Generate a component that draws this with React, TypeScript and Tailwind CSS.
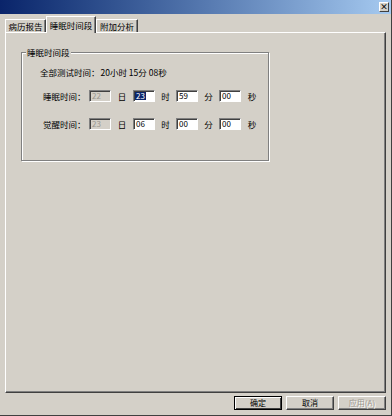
const FONT = {
  fontFamily: '"Noto Sans CJK SC", "Liberation Sans", sans-serif',
};

function TimeBox({
  value,
  disabled,
  selected,
}: {
  value: string;
  disabled?: boolean;
  selected?: boolean;
}) {
  return (
    <div
      className={
        "flex h-[12px] w-[22px] items-center border-t border-l border-b border-r border-t-[#808080] border-l-[#808080] border-b-white border-r-white pl-[1px] text-[8px] leading-none shadow-[inset_1px_1px_0_#404040] " +
        (disabled ? "bg-[#d4d0c8] text-[#9a978f]" : "bg-white text-black")
      }
    >
      {selected ? (
        <span className="bg-[#0a246a] px-px text-white">{value}</span>
      ) : (
        <span className="px-px">{value}</span>
      )}
    </div>
  );
}

function TimeRow({
  label,
  day,
  hour,
  min,
  sec,
  selectedHour,
}: {
  label: string;
  day: string;
  hour: string;
  min: string;
  sec: string;
  selectedHour?: boolean;
}) {
  return (
    <div className="flex h-[12px] items-center whitespace-nowrap text-[8.5px] leading-none">
      <span className="w-[46px]">{label}</span>
      <TimeBox value={day} disabled />
      <span className="w-[22px] text-center">日</span>
      <TimeBox value={hour} selected={selectedHour} />
      <span className="w-[21px] text-center">时</span>
      <TimeBox value={min} />
      <span className="w-[21px] text-center">分</span>
      <TimeBox value={sec} />
      <span className="w-[22px] text-center">秒</span>
    </div>
  );
}

function Tab({
  label,
  width,
  active,
}: {
  label: string;
  width: string;
  active?: boolean;
}) {
  if (active) {
    return (
      <div
        className={
          "relative z-10 -mb-px flex h-[17px] shrink-0 items-center justify-center whitespace-nowrap border-l border-t border-r border-l-white border-t-white border-r-[#404040] bg-[#d4d0c8] pt-[1px] shadow-[inset_-1px_0_0_#808080] " +
          width
        }
      >
        {label}
      </div>
    );
  }
  return (
    <div
      className={
        "flex h-[13px] shrink-0 items-center justify-center whitespace-nowrap border-l border-t border-r border-l-white border-t-white border-r-[#404040] shadow-[inset_-1px_0_0_#808080] " +
        width
      }
    >
      {label}
    </div>
  );
}

function Button({
  label,
  primary,
  disabled,
}: {
  label: string;
  primary?: boolean;
  disabled?: boolean;
}) {
  return (
    <div
      className={
        "flex h-[14px] w-[48px] items-center justify-center whitespace-nowrap text-[8px] leading-none " +
        (primary
          ? "border border-black shadow-[inset_1px_1px_0_#fff,inset_-1px_-1px_0_#404040]"
          : "border border-t-white border-l-white border-b-[#404040] border-r-[#404040] shadow-[inset_-1px_-1px_0_#808080]") +
        (disabled ? " text-[#9a978f] [text-shadow:1px_1px_0_#fff]" : " text-black")
      }
    >
      {label}
    </div>
  );
}

export default function App() {
  return (
    <div
      className="flex h-[416px] w-[392px] flex-col overflow-hidden border-r border-b border-r-[#404040] border-b-[#404040] bg-[#d4d0c8] text-black"
      style={FONT}
    >
      {/* 标题栏 */}
      <div className="flex h-[14px] shrink-0 items-center justify-end bg-gradient-to-r from-[#0a246a] to-[#a6caf0] pr-[2px]">
        <div className="flex h-[10px] w-[10px] items-center justify-center border border-t-white border-l-white border-b-[#404040] border-r-[#404040] bg-[#d4d0c8] text-[8px] font-bold leading-none">
          ×
        </div>
      </div>

      {/* 选项卡 */}
      <div className="mt-[2px] flex h-[16px] shrink-0 items-end pl-[5px] text-[8.5px] leading-none">
        <Tab label="病历报告" width="w-[41px]" />
        <Tab label="睡眠时间段" width="w-[50px]" active />
        <Tab label="附加分析" width="w-[42px]" />
      </div>

      <div className="ml-[5px] h-[361px] w-[381px] shrink-0 border-l border-t border-r border-b border-l-white border-t-white border-r-[#404040] border-b-[#404040] pt-[19px] pl-[15px] shadow-[inset_-1px_-1px_0_#808080]">
        {/* 睡眠时间段 分组框 */}
        <div className="h-[109px] w-[248px] border border-[#808080] shadow-[inset_1px_1px_0_#fff,1px_1px_0_#fff]">
          <div className="-mt-[6px] ml-[4px] w-fit whitespace-nowrap bg-[#d4d0c8] px-[1px] text-[8.5px] leading-[10px]">
            睡眠时间段
          </div>
          <div className="mt-[10px] flex whitespace-nowrap pl-[18px] text-[8.5px] leading-[10px]">
            <span>全部测试时间：</span>
            <span className="ml-[1px]">20小时 15分 08秒</span>
          </div>
          <div className="mt-[13px] flex flex-col gap-[16px] pl-[21px]">
            <TimeRow label="睡眠时间：" day="22" hour="23" min="59" sec="00" selectedHour />
            <TimeRow label="觉醒时间：" day="23" hour="06" min="00" sec="00" />
          </div>
        </div>
      </div>

      {/* 按钮 */}
      <div className="mt-[3px] flex justify-end gap-[4px] pr-[5px]">
        <Button label="确定" primary />
        <Button label="取消" />
        <Button label="应用(A)" disabled />
      </div>
    </div>
  );
}
